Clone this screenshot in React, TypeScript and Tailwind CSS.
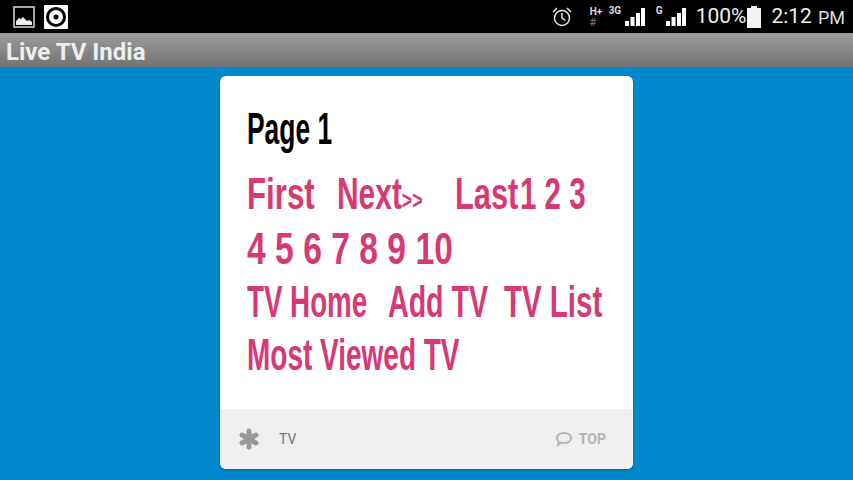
import React from "react";

const Signal = ({ className = "" }: { className?: string }) => (
  <svg width="21" height="20" viewBox="0 0 21 20" className={className}>
    <path fill="#fff" d="M1 14h4v5H1zM6.500 10h4v9h-4zM12 6h4v13h-4zM17 1h4v18h-4z" />
  </svg>
);

const Word = ({ children, w, s }: { children: React.ReactNode; w: string; s: string }) => (
  <span className={`inline-block shrink-0 whitespace-nowrap ${w}`}>
    <span className={`inline-block origin-left ${s}`}>{children}</span>
  </span>
);

export default function App() {
  return (
    <div className="w-[853px] h-[480px] overflow-hidden flex flex-col bg-[#0088cc] font-['Roboto',sans-serif]">
      {/* Status bar */}
      <div className="h-[33px] bg-black flex items-center justify-between pl-[13px] pr-[8px] shrink-0">
        <div className="flex items-center gap-[9px]">
          <svg width="22" height="22" viewBox="0 0 22 22">
            <rect x="1" y="1" width="20" height="20" fill="#000" stroke="#ddd" strokeWidth="1.500" />
            <path fill="#eee" d="M3 19v-4l3-3 2 1 2-2 4 4 2-1 3 2v3z" />
          </svg>
          <svg width="24" height="24" viewBox="0 0 24 24">
            <rect width="24" height="24" rx="1" fill="#fff" />
            <circle cx="12" cy="12" r="8.500" fill="none" stroke="#000" strokeWidth="3" />
            <circle cx="12" cy="12" r="2.500" fill="#000" />
          </svg>
        </div>
        <div className="flex items-center text-white">
          <svg width="22" height="22" viewBox="0 0 22 22" fill="none" stroke="#e5e5e5" strokeWidth="1.500" className="mr-[17px]">
            <circle cx="11" cy="12" r="7.500" />
            <path d="M11 7v5l3.500 2.500M2 6l4-4M20 6l-4-4" />
          </svg>
          <div className="relative w-[19px] h-[24px]">
            <span className="absolute left-0 top-[2px] text-[10px] leading-[10px] font-bold text-[#ddd] whitespace-nowrap">H+</span>
            <span className="absolute left-0 top-[13px] text-[11px] leading-[10px] font-bold text-[#666]">#</span>
          </div>
          <span className="text-[10px] w-[15px] leading-none font-bold text-[#ddd] mb-[11px]">3G</span>
          <Signal className="mr-[11px]" />
          <span className="text-[10px] w-[9px] leading-none font-bold text-[#ddd] mb-[11px]">G</span>
          <Signal className="mr-[10px]" />
          <span className="text-[21px] leading-none text-[#eee]">100%</span>
          <svg width="14" height="22" viewBox="0 0 14 22" className="mr-[10px] ml-[1px]">
            <path fill="#f2f2f2" d="M4 0h6v2h4v20H0V2h4z" />
          </svg>
          <span className="text-[21px] leading-none text-[#eee]">2:12</span>
          <span className="text-[18px] leading-none text-[#ddd] ml-[6px] mt-[2px]">PM</span>
        </div>
      </div>

      {/* Title bar */}
      <div className="h-[34px] shrink-0 bg-gradient-to-b from-[#9c9c9c] to-[#737373] flex items-center px-[6px] pt-[3px]">
        <span className="text-[24px] font-bold text-[#eeeeee] leading-none">Live TV India</span>
      </div>

      {/* Card */}
      <main className="flex-1 flex justify-center pt-[9px]">
        <article className="w-[413px] h-[393px] bg-white rounded-[6px] overflow-hidden flex flex-col shadow-[0_1px_2px_rgba(0,0,0,0.3)]">
          <div className="flex-1 pl-[27px] pt-[29px] font-['Liberation_Sans',sans-serif] font-bold">
            <h1 className="text-[44px] leading-[48px] text-black font-bold">
              <Word w="w-[100px]" s="scale-x-[0.6]">Page 1</Word>
            </h1>
            <div className="mt-[14px] text-[#d63a75] text-[44px] leading-[53px]">
              <div className="flex items-baseline h-[55px]">
                <Word w="w-[90px]" s="scale-x-[0.71]">First</Word>
                <Word w="w-[118px]" s="scale-x-[0.68]">Next<span className="text-[26px] leading-[0]">&gt;&gt;</span></Word>
                <Word w="w-[65px]" s="scale-x-[0.7]">Last</Word>
                <Word w="w-[70px]" s="scale-x-[0.67]">1 2 3</Word>
              </div>
              <div className="flex items-baseline h-[53px]">
                <Word w="w-[210px]" s="scale-x-[0.765]">4 5 6 7 8 9 10</Word>
              </div>
              <div className="flex items-baseline h-[53px]">
                <Word w="w-[141px]" s="scale-x-[0.63]">TV Home</Word>
                <Word w="w-[116px]" s="scale-x-[0.65]">Add TV</Word>
                <Word w="w-[100px]" s="scale-x-[0.67]">TV List</Word>
              </div>
              <div className="flex items-baseline h-[53px]">
                <Word w="w-[220px]" s="scale-x-[0.636]">Most Viewed TV</Word>
              </div>
            </div>
          </div>
          <footer className="h-[60px] shrink-0 bg-[#efefef] flex items-center justify-between pl-[18px] pr-[27px]">
            <div className="flex items-center gap-[19px]">
              <svg width="22" height="22" viewBox="0 0 22 22" stroke="#999" strokeWidth="5" strokeLinecap="round">
                <path d="M11 3v16M4 7l14 8M18 7L4 15" />
              </svg>
              <span className="text-[14px] text-[#777]">TV</span>
            </div>
            <div className="flex items-center gap-[6px]">
              <svg width="18" height="16" viewBox="0 0 18 16" fill="none" stroke="#b5b5b5" strokeWidth="2">
                <path d="M9 2c4 0 7 2 7 5s-3 5-7 5c-1 0-2 0-3-.4L3 14l.6-3.500C2.500 9.500 2 8.300 2 7c0-3 3-5 7-5z" />
              </svg>
              <span className="text-[14px] font-bold text-[#b5b5b5]">TOP</span>
            </div>
          </footer>
        </article>
      </main>
    </div>
  );
}
